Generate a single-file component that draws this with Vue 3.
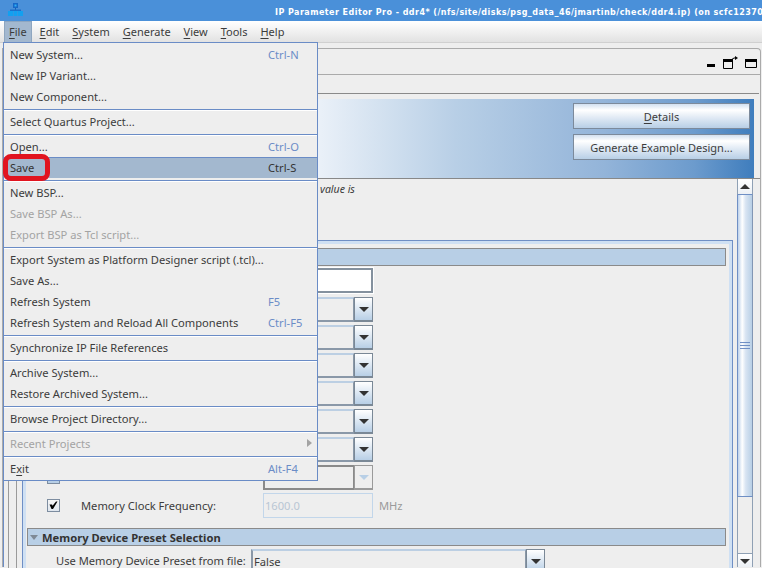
<script setup>
const menus = ['File', 'Edit', 'System', 'Generate', 'View', 'Tools', 'Help']
const fileMenu = [
  { label: 'New System...', key: 'Ctrl-N' },
  { label: 'New IP Variant...' },
  { label: 'New Component...' },
  { sep: true },
  { label: 'Select Quartus Project...' },
  { sep: true },
  { label: 'Open...', key: 'Ctrl-O' },
  { label: 'Save', key: 'Ctrl-S', active: true },
  { sep: true },
  { label: 'New BSP...' },
  { label: 'Save BSP As...', off: true },
  { label: 'Export BSP as Tcl script...', off: true },
  { sep: true },
  { label: 'Export System as Platform Designer script (.tcl)...' },
  { label: 'Save As...' },
  { label: 'Refresh System', key: 'F5' },
  { label: 'Refresh System and Reload All Components', key: 'Ctrl-F5' },
  { sep: true },
  { label: 'Synchronize IP File References' },
  { sep: true },
  { label: 'Archive System...' },
  { label: 'Restore Archived System...' },
  { sep: true },
  { label: 'Browse Project Directory...' },
  { sep: true },
  { label: 'Recent Projects', off: true, sub: true },
  { sep: true },
  { label: 'Exit', key: 'Alt-F4', mn: 1 }
]
const dropdowns = [1, 2, 3, 4, 5, 6]
</script>

<template>
  <div class="root">
    <header class="title">
      <svg class="logo" width="15" height="13" viewBox="0 0 15 13">
        <rect x="5" y="0" width="5" height="5" fill="#1668c8" />
        <rect x="6.500" y="1.500" width="2" height="2" fill="#2fb0f5" />
        <rect x="7" y="5" width="1" height="2" fill="#1a5fb0" />
        <rect x="2" y="6.500" width="11" height="1.500" fill="#1a70cc" />
        <rect x="0" y="8" width="5" height="5" fill="#12a0f0" />
        <rect x="5.500" y="8" width="4" height="5" fill="#12a0f0" />
        <rect x="10" y="8" width="5" height="5" fill="#12a0f0" />
      </svg>
      <span class="title-text">IP Parameter Editor Pro - ddr4* (/nfs/site/disks/psg_data_46/jmartinb/check/ddr4.ip) (on scfc12370</span>
    </header>

    <nav class="menubar">
      <span v-for="(m, i) in menus" :key="m" class="mb-item" :class="{ open: i === 0 }"><u>{{ m[0] }}</u>{{ m.slice(1) }}</span>
    </nav>

    <section class="panel">
      <div class="panel-head">
        <div class="win-icons">
          <svg width="8" height="3" viewBox="0 0 8 3" class="ic-min"><rect width="8" height="3" fill="#000" /></svg>
          <svg width="15" height="13" viewBox="0 0 15 13" class="ic-float">
            <path d="M.5 5.500h9v7h-9z" fill="none" stroke="#000" />
            <rect x="0" y="3" width="10" height="3" fill="#000" />
            <path d="M8 4 11 2h2" stroke="#000" fill="none" />
            <path d="M12 0l3 2-3 2z" fill="#000" />
          </svg>
          <svg width="12" height="9" viewBox="0 0 12 9" class="ic-max">
            <path d="M.5.500h11v8H.5z" fill="none" stroke="#000" />
            <rect width="12" height="3" fill="#000" />
          </svg>
        </div>
      </div>
      <div class="panel-tabs"></div>

      <div class="banner">
        <button class="btn"><u>D</u>etails</button>
        <button class="btn">Generate Example Design...</button>
      </div>

      <div class="content">
        <div class="main">
          <p class="note">value is</p>
          <div class="nest-a">
            <div class="nest-b">
              <div class="group">
                <div class="section"><i class="tri"></i></div>

                <div class="row first"><span class="control input"></span></div>
                <div v-for="d in dropdowns" :key="d" class="row">
                  <span class="control select">
                    <span class="sel-field"></span>
                    <span class="sel-btn"><i class="arrow"></i></span>
                  </span>
                </div>
                <div class="row">
                  <span class="check hidden-check"></span>
                  <span class="control select disabled">
                    <span class="sel-field"></span>
                    <span class="sel-btn"><i class="arrow"></i></span>
                  </span>
                </div>
                <div class="row">
                  <span class="check">
                    <svg width="11" height="11" viewBox="0 0 11 11"><path d="M1.500 4.500h2.500l.6 1.300L8 1.500h1.500L5 9H3.500z" fill="#000" /></svg>
                  </span>
                  <span class="label">Memory Clock Frequency:</span>
                  <span class="control input off">1600.0</span>
                  <span class="unit">MHz</span>
                </div>

                <div class="section second"><i class="tri"></i><b>Memory Device Preset Selection</b></div>
                <div class="preset">
                  <span class="preset-label">Use Memory Device Preset from file:</span>
                  <span class="control select wide">
                    <span class="sel-field">False</span>
                    <span class="sel-btn"><i class="arrow"></i></span>
                  </span>
                </div>
              </div>
            </div>
          </div>
        </div>

        <aside class="scrollbar">
          <div class="sb-btn up"><i class="sb-up"></i></div>
          <div class="thumb"><i class="grip"></i></div>
          <div class="track"></div>
          <div class="sb-btn down"><i class="arrow"></i></div>
        </aside>
      </div>
    </section>

    <div class="menu">
      <template v-for="(it, i) in fileMenu" :key="i">
        <div v-if="it.sep" class="sep"></div>
        <div v-else class="item" :class="{ active: it.active, off: it.off }">
          <span v-if="it.mn !== undefined">{{ it.label.slice(0, it.mn) }}<u>{{ it.label[it.mn] }}</u>{{ it.label.slice(it.mn + 1) }}</span>
          <span v-else>{{ it.label }}</span>
          <span v-if="it.key" class="key">{{ it.key }}</span>
          <i v-if="it.sub" class="sub"></i>
        </div>
      </template>
    </div>

    <div class="callout"></div>
  </div>
</template>

<style>
html, body { margin: 0; background: #eeeeee; }
</style>

<style scoped>
.root {
  position: relative;
  width: 762px;
  height: 568px;
  overflow: hidden;
  background: #eeeeee;
  font-family: "Noto Sans", sans-serif;
  font-size: 11.15px;
  color: #3c3c3c;
}
u { text-underline-offset: 2px; text-decoration-thickness: 1px; }

.title {
  height: 21px;
  background: #4a90d9;
  display: flex;
  align-items: center;
  white-space: nowrap;
  overflow: hidden;
  padding-left: 8px;
}
.logo { flex: none; margin-top: -2px; }
.title-text {
  margin-left: 252px;
  font-family: "DejaVu Sans", sans-serif;
  font-size: 8px;
  font-weight: 700;
  color: #fff;
  letter-spacing: 0.45px;
  margin-top: 3px;
}

.menubar {
  height: 21px;
  display: flex;
  padding-left: 4px;
  background: linear-gradient(#ffffff, #e2e2e2);
  border-bottom: 1px solid #d0d0d0;
}
.mb-item {
  padding: 0 5px;
  line-height: 21px;
  margin-right: 3px;
  font-size: 11px;
}
.mb-item.open {
  background: #a3b8cf;
  border: 1px solid #8ea6c0;
  border-bottom: 0;
  line-height: 20px;
  padding: 0 4px;
  margin-right: 3px;
}

.panel {
  margin: 5px 1px 0 2px;
  border: 1px solid #aaaaaa;
  border-bottom: 0;
  border-top-right-radius: 4px;
}
.panel-head {
  height: 25px;
  border-bottom: 1px solid #aaaaaa;
  position: relative;
}
.win-icons {
  position: absolute;
  top: 7px;
  right: 3px;
  display: flex;
  align-items: flex-end;
}
.ic-min { margin-right: 8px; margin-bottom: 2px; display: block; }
.ic-float { margin-right: 7px; display: block; }
.ic-max { display: block; margin-bottom: 1px; }
.panel-tabs {
  height: 18px;
  border-bottom: 1px solid #8a8a8a;
  margin-right: 1px;
}

.banner {
  margin: 5px 6px 0 5px;
  height: 79px;
  box-sizing: border-box;
  padding: 4px 4px 0 0;
  display: flex;
  flex-direction: column;
  align-items: flex-end;
  gap: 5px;
  background: linear-gradient(90deg, #ffffff 0, #ffffff 35%, #e9f0f8 42%, #b8cfe6 60%, #93b4d9 80%, #6c9bcd 92%, #3f7dbd 100%);
}
.btn {
  width: 177px;
  height: 26px;
  box-sizing: border-box;
  border: 1px solid #7c8a9b;
  background: linear-gradient(#d2e0f0 0, #ffffff 25%, #e2ebf5 55%, #b8cfe6 100%);
  font: inherit;
  font-size: 11px;
  color: #3c3c3c;
  padding: 0;
}

.content {
  display: flex;
  border-top: 1px solid #888888;
  border-left: 1px solid #6a8cc6;
  height: 389px;
  box-sizing: border-box;
}
.main {
  flex: 1;
  padding: 0 4px 0 3px;
  min-width: 0;
}
.note {
  margin: 0;
  height: 61px;
  padding: 2px 0 0 313px;
  box-sizing: border-box;
  font-style: italic;
  font-size: 10.5px;
  line-height: 17px;
}
.nest-a { border-left: 1px solid #9a9a9a; padding-left: 7px; margin-left: 1px; }
.nest-b { border-left: 1px solid #9a9a9a; padding-left: 5px; }
.group {
  border: 1px solid #6f8fc5;
  box-shadow: inset 0 0 0 3px #cfe0f3;
  padding: 7px 6px 40px 4px;
}
.section {
  height: 18px;
  box-sizing: border-box;
  border: 1px solid #8a8a8a;
  background: #b8cfe6;
  display: flex;
  align-items: center;
  padding-left: 2px;
  color: #333;
}
.section b { margin-left: 4px; font-weight: 700; font-size: 11.2px; }
.section.second { margin-top: 10px; }
.tri {
  width: 0;
  height: 0;
  border: 4px solid transparent;
  border-top: 5px solid #7f8a96;
  border-bottom: 0;
  margin-left: 0;
}
.row {
  height: 25px;
  margin-top: 3px;
  display: flex;
  align-items: center;
  padding-left: 236px;
  position: relative;
}
.row.first { margin-top: 2px; margin-bottom: 4px; }
.row.first + .row { margin-top: 0; }
.row:has(.check) { padding-left: 20px; }
.check {
  width: 13px;
  height: 13px;
  box-sizing: border-box;
  border: 1px solid #7d8da0;
  background: linear-gradient(#f5f5f5, #dfe6ee);
  display: flex;
  align-items: center;
  justify-content: center;
  flex: none;
}
.hidden-check {
  background: #b8cfe6;
  margin-right: 203px;
}
.label { margin-left: 21px; width: 182px; flex: none; }
.unit { margin-left: 6px; color: #9a9a9a; }
.control {
  width: 110px;
  height: 25px;
  box-sizing: border-box;
  display: flex;
  flex: none;
}
.input {
  background: #fff;
  border: 2px solid #84919e;
  border-bottom-width: 2px;
  outline: 1px solid #fff;
}
.input.off {
  background: transparent;
  border: 1px solid #c2d6ea;
  outline: 0;
  color: #b9c6d4;
  padding-left: 1px;
  align-items: center;
}
.select { background: #eee; }
.sel-field {
  flex: 1;
  border: 2px solid #8a98a8;
  border-top-color: #bccfe3;
  border-right-width: 1px;
  padding-left: 1px;
  line-height: 21px;
}
.sel-btn {
  width: 19px;
  box-sizing: border-box;
  border: 1px solid #7a8896;
  border-width: 1px 1px 2px 1px;
  background: linear-gradient(#ffffff, #b8cfe6);
  display: flex;
  align-items: center;
  justify-content: center;
}
.arrow {
  width: 0;
  height: 0;
  border: 5px solid transparent;
  border-top: 5px solid #333;
  border-bottom: 0;
  margin-top: 1px;
}
.disabled .sel-field { border-color: #8a8a8a; }
.disabled .sel-btn { background: #eee; border-color: #9a9a9a; }
.disabled .arrow { border-top-color: #b8cfe6; }

.preset {
  display: flex;
  align-items: flex-start;
  margin-top: 3px;
  padding-left: 29px;
}
.preset-label { width: 195px; line-height: 22px; padding-top: 1px; flex: none; }
.wide { width: 294px; }

.scrollbar {
  width: 16px;
  margin-right: 7px;
  flex: none;
  display: flex;
  flex-direction: column;
  height: 389px;
}
.sb-btn {
  box-sizing: border-box;
  border: 1px solid #8fa0b4;
  border-top: 0;
  background: linear-gradient(#fff, #ecf0f5);
  display: flex;
  align-items: center;
  justify-content: center;
  flex: none;
}
.up { height: 16px; border-bottom: 1px solid #6f8fc5; }
.down { height: 14px; border-top: 1px solid #8fa0b4; border-bottom: 0; }
.sb-up {
  width: 0;
  height: 0;
  border: 5px solid transparent;
  border-bottom: 5px solid #333;
  border-top: 0;
}
.thumb {
  height: 302px;
  flex: none;
  box-sizing: border-box;
  border: 1px solid #8296b4;
  border-left-color: #6f8fc5;
  border-top: 0;
  border-bottom: 1px solid #6f8fc5;
  background: linear-gradient(90deg, #bdd1ea 0, #ffffff 30%, #d8e4f2 55%, #b8cfe6 100%);
  display: flex;
  align-items: center;
  justify-content: center;
}
.grip {
  width: 10px;
  height: 5px;
  border-top: 1px solid #6f8fc5;
  border-bottom: 1px solid #6f8fc5;
  background: linear-gradient(transparent 2px, #6f8fc5 2px, #6f8fc5 3px, transparent 3px);
}
.track {
  flex: none;
  height: 56px;
  box-sizing: border-box;
  border: 1px solid #8fa0b4;
  border-width: 0 1px;
  background: #eee;
}

.menu {
  position: absolute;
  left: 3px;
  top: 42px;
  width: 315px;
  box-sizing: border-box;
  background: #eeeeee;
  border: 1px solid #6a8cc6;
  padding: 1px 0 1px;
}
.item {
  height: 21px;
  line-height: 21px;
  padding-left: 6px;
  position: relative;
  white-space: nowrap;
}
.item.off { color: #a3a3a3; }
.item.active {
  background: #a3b8cf;
  box-shadow: inset 0 1px 0 #6a8cc6;
  color: #333;
}
.key {
  position: absolute;
  left: 264px;
  top: 0;
  color: #6b8cc7;
}
.active .key { color: #333; }
.sub {
  position: absolute;
  left: 303px;
  top: 6px;
  width: 0;
  height: 0;
  border: 4px solid transparent;
  border-left: 5px solid #a3a3a3;
  border-right: 0;
}
.sep {
  height: 4px;
  box-sizing: border-box;
  padding-top: 2px;
}
.sep::before {
  content: "";
  display: block;
  height: 1px;
  background: #6a8cc6;
  box-shadow: 0 1px 0 #fff;
}
.callout {
  position: absolute;
  left: 3px;
  top: 154px;
  width: 47px;
  height: 27px;
  box-sizing: border-box;
  border: 5px solid #e1141f;
  border-radius: 8px;
}
</style>
